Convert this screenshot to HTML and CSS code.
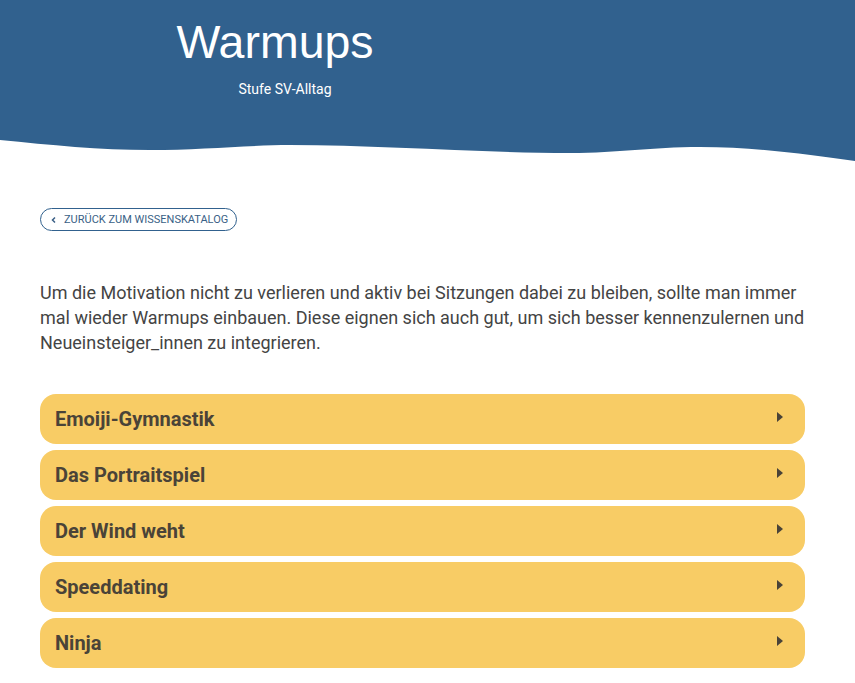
FILE: index.html
```html
<!DOCTYPE html>
<html lang="de">
<head>
<meta charset="utf-8">
<title>Warmups</title>
<link rel="stylesheet" href="styles.css">
</head>
<body>
<header class="hero">
  <div class="hero-inner">
    <h1 class="hero-title">Warmups</h1>
    <p class="hero-sub">Stufe SV-Alltag</p>
  </div>
  <svg class="hero-wave" viewBox="0 0 855 24" preserveAspectRatio="none" aria-hidden="true">
    <path d="M0,0 L0,0 C50,5 100,10 150,10 C200,10 250,5 290,5 C380,5 480,13 570,13 C620,13 650,7 700,7 C760,7 810,15 855,21 L855,0 Z" fill="#31618e"/>
  </svg>
</header>

<main class="content">
  <a class="back-link" href="#">
    <svg class="back-icon" viewBox="0 0 8 8" aria-hidden="true"><path d="M5,1.5 L2.5,4 L5,6.5" fill="none" stroke="currentColor" stroke-width="1.5"/></svg>
    Zurück zum Wissenskatalog
  </a>

  <p class="intro">Um die Motivation nicht zu verlieren und aktiv bei Sitzungen dabei zu bleiben, sollte man immer mal wieder Warmups einbauen. Diese eignen sich auch gut, um sich besser kennenzulernen und Neueinsteiger_innen zu integrieren.</p>

  <div class="accordion">
    <div class="acc-item"><span class="acc-title">Emoiji-Gymnastik</span><span class="acc-arrow"></span></div>
    <div class="acc-item"><span class="acc-title">Das Portraitspiel</span><span class="acc-arrow"></span></div>
    <div class="acc-item"><span class="acc-title">Der Wind weht</span><span class="acc-arrow"></span></div>
    <div class="acc-item"><span class="acc-title">Speeddating</span><span class="acc-arrow"></span></div>
    <div class="acc-item"><span class="acc-title">Ninja</span><span class="acc-arrow"></span></div>
  </div>
</main>
</body>
</html>
```

FILE: styles.css
```css
* { box-sizing: border-box; }

html, body {
  margin: 0;
  padding: 0;
  background: #ffffff;
}

body {
  font-family: Roboto, "Noto Sans", Arial, sans-serif;
  color: #444444;
}

/* blue banner with wavy lower edge */
.hero-inner {
  background: #31618e;
  height: 140px;
  width: 100%;
  padding-top: 16px;
}

.hero-title {
  width: 550px;
  margin: 0;
  text-align: center;
  font-family: "Liberation Sans", Arial, sans-serif;
  font-weight: 400;
  font-size: 46.5px;
  line-height: 52px;
  color: #ffffff;
}

.hero-sub {
  width: 550px;
  margin: 13px 0 0 10px;
  text-align: center;
  font-size: 14px;
  font-weight: 400;
  line-height: 16px;
  color: #ffffff;
}

.hero-wave {
  display: block;
  width: 100%;
  height: 24px;
}

.content {
  padding: 44px 50px 0 40px;
}

.back-link {
  display: inline-flex;
  align-items: center;
  gap: 6px;
  height: 23px;
  padding: 0 8px 0 9px;
  border: 1px solid #31618e;
  border-radius: 12px;
  font-size: 11px;
  font-weight: 400;
  text-transform: uppercase;
  text-decoration: none;
  color: #3a5f86;
}

.back-icon {
  width: 8px;
  height: 8px;
}

.intro {
  margin: 49px 0 0 0;
  font-size: 18px;
  line-height: 25px;
  color: #444444;
}

.accordion {
  display: flex;
  flex-direction: column;
  gap: 6px;
  margin-top: 39px;
}

.acc-item {
  display: flex;
  align-items: center;
  justify-content: space-between;
  height: 50px;
  padding: 0 22px 0 15px;
  background: #f8cc65;
  border-radius: 16px;
}

.acc-title {
  font-size: 20px;
  font-weight: 700;
  color: #4a4338;
}

.acc-arrow {
  width: 0;
  height: 0;
  border-top: 5px solid transparent;
  border-bottom: 5px solid transparent;
  border-left: 6px solid #4a4338;
  margin-top: -4px;
}
```
